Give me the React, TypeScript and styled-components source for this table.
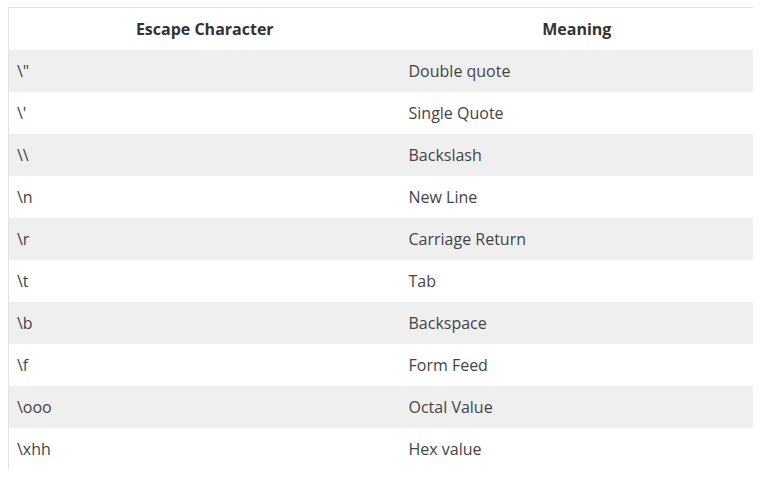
import React from "react";
import styled, { createGlobalStyle } from "styled-components";

const Global = createGlobalStyle`
  html, body { margin: 0; padding: 0; background: #ffffff; }
  body { padding: 7px 8px 0 8px; font-family: "Open Sans", "Noto Sans", sans-serif; }
`;

const Table = styled.table`
  width: 745px;
  border-collapse: collapse;
  border-top: 1px solid #e3e3e3;
  border-left: 1px solid #e3e3e3;
  font-size: 16px;
  color: #444;
  table-layout: fixed;
`;

const HeadCell = styled.th<{ $w?: number }>`
  height: 42px;
  padding: 0 8px;
  box-sizing: border-box;
  font-weight: 700;
  color: #333;
  text-align: center;
  width: ${(p) => (p.$w ? `${p.$w}px` : "auto")};
`;

const Row = styled.tr<{ $striped: boolean }>`
  background: ${(p) => (p.$striped ? "#efefef" : "#ffffff")};
`;

const Cell = styled.td`
  height: 42px;
  box-sizing: border-box;
  padding: 0 8px;
  text-align: left;
  vertical-align: middle;
`;

const rows: [string, string][] = [
  ['\\"', "Double quote"],
  ["\\'", "Single Quote"],
  ["\\\\", "Backslash"],
  ["\\n", "New Line"],
  ["\\r", "Carriage Return"],
  ["\\t", "Tab"],
  ["\\b", "Backspace"],
  ["\\f", "Form Feed"],
  ["\\ooo", "Octal Value"],
  ["\\xhh", "Hex value"],
];

export default function App() {
  return (
    <>
      <Global />
      <Table>
        <thead>
          <tr>
            <HeadCell $w={392}>Escape Character</HeadCell>
            <HeadCell>Meaning</HeadCell>
          </tr>
        </thead>
        <tbody>
          {rows.map(([k, v], i) => (
            <Row key={k} $striped={i % 2 === 0}>
              <Cell>{k}</Cell>
              <Cell>{v}</Cell>
            </Row>
          ))}
        </tbody>
      </Table>
    </>
  );
}
